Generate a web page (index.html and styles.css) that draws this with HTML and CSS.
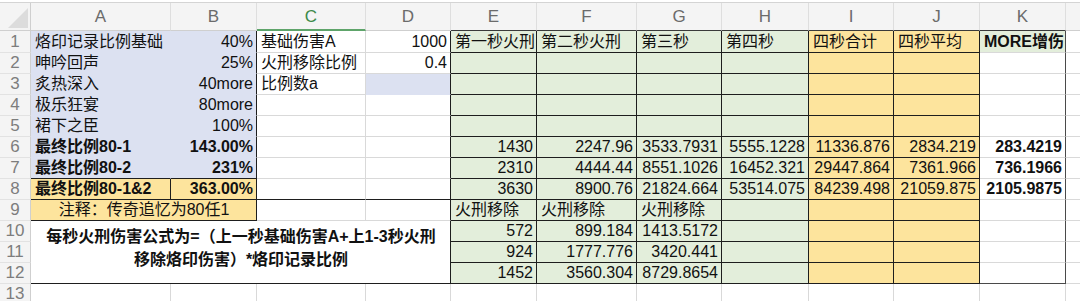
FILE: index.html
```html
<!DOCTYPE html>
<html lang="zh-CN">
<head>
<meta charset="utf-8">
<title>烙印记录</title>
<link rel="stylesheet" href="styles.css">
</head>
<body>
<div class="sheet">
  <!-- header row -->
  <div class="corner"><span class="tri"></span></div>
  <div class="ch">A</div>
  <div class="ch">B</div>
  <div class="ch sel">C</div>
  <div class="ch">D</div>
  <div class="ch dk">E</div>
  <div class="ch dk">F</div>
  <div class="ch dk">G</div>
  <div class="ch dk">H</div>
  <div class="ch dk">I</div>
  <div class="ch dk">J</div>
  <div class="ch dk">K</div>
  <div class="ch last"></div>

  <!-- row 1 -->
  <div class="rh">1</div>
  <div class="cell lav">烙印记录比例基础</div>
  <div class="cell lav r dr">40%</div>
  <div class="cell">基础伤害A</div>
  <div class="cell r dr">1000</div>
  <div class="cell grn dr db">第一秒火刑</div>
  <div class="cell grn dr db">第二秒火刑</div>
  <div class="cell grn dr db">第三秒</div>
  <div class="cell grn dr db">第四秒</div>
  <div class="cell yel dr db">四秒合计</div>
  <div class="cell yel dr db">四秒平均</div>
  <div class="cell grn b kr">MORE增伤</div>
  <div class="cell last"></div>

  <!-- row 2 -->
  <div class="rh">2</div>
  <div class="cell lav">呻吟回声</div>
  <div class="cell lav r dr">25%</div>
  <div class="cell">火刑移除比例</div>
  <div class="cell r dr">0.4</div>
  <div class="cell grn dr db"></div>
  <div class="cell grn dr db"></div>
  <div class="cell grn dr db"></div>
  <div class="cell grn dr db"></div>
  <div class="cell yel dr db"></div>
  <div class="cell yel dr db"></div>
  <div class="cell kr"></div>
  <div class="cell last"></div>

  <!-- row 3 -->
  <div class="rh">3</div>
  <div class="cell lav">炙热深入</div>
  <div class="cell lav r dr">40more</div>
  <div class="cell">比例数a</div>
  <div class="cell lav dr"></div>
  <div class="cell grn dr db"></div>
  <div class="cell grn dr db"></div>
  <div class="cell grn dr db"></div>
  <div class="cell grn dr db"></div>
  <div class="cell yel dr db"></div>
  <div class="cell yel dr db"></div>
  <div class="cell kr"></div>
  <div class="cell last"></div>

  <!-- row 4 -->
  <div class="rh">4</div>
  <div class="cell lav">极乐狂宴</div>
  <div class="cell lav r dr">80more</div>
  <div class="cell"></div>
  <div class="cell dr"></div>
  <div class="cell grn dr db"></div>
  <div class="cell grn dr db"></div>
  <div class="cell grn dr db"></div>
  <div class="cell grn dr db"></div>
  <div class="cell yel dr db"></div>
  <div class="cell yel dr db"></div>
  <div class="cell kr"></div>
  <div class="cell last"></div>

  <!-- row 5 -->
  <div class="rh">5</div>
  <div class="cell lav">裙下之臣</div>
  <div class="cell lav r dr">100%</div>
  <div class="cell"></div>
  <div class="cell dr"></div>
  <div class="cell grn dr db"></div>
  <div class="cell grn dr db"></div>
  <div class="cell grn dr db"></div>
  <div class="cell grn dr db"></div>
  <div class="cell yel dr db"></div>
  <div class="cell yel dr db"></div>
  <div class="cell kr"></div>
  <div class="cell last"></div>

  <!-- row 6 -->
  <div class="rh">6</div>
  <div class="cell lav b">最终比例80-1</div>
  <div class="cell lav r b dr">143.00%</div>
  <div class="cell"></div>
  <div class="cell dr"></div>
  <div class="cell grn r dr db">1430</div>
  <div class="cell grn r dr db">2247.96</div>
  <div class="cell grn r dr db">3533.7931</div>
  <div class="cell grn r dr db">5555.1228</div>
  <div class="cell yel r dr db">11336.876</div>
  <div class="cell yel r dr db">2834.219</div>
  <div class="cell r b kr">283.4219</div>
  <div class="cell last"></div>

  <!-- row 7 -->
  <div class="rh">7</div>
  <div class="cell lav b db">最终比例80-2</div>
  <div class="cell lav r b dr db">231%</div>
  <div class="cell"></div>
  <div class="cell dr"></div>
  <div class="cell grn r dr db">2310</div>
  <div class="cell grn r dr db">4444.44</div>
  <div class="cell grn r dr db">8551.1026</div>
  <div class="cell grn r dr db">16452.321</div>
  <div class="cell yel r dr db">29447.864</div>
  <div class="cell yel r dr db">7361.966</div>
  <div class="cell r b kr">736.1966</div>
  <div class="cell last"></div>

  <!-- row 8 -->
  <div class="rh">8</div>
  <div class="cell yel b dr db">最终比例80-1&amp;2</div>
  <div class="cell yel r b dr db">363.00%</div>
  <div class="cell db"></div>
  <div class="cell dr db"></div>
  <div class="cell grn r dr db">3630</div>
  <div class="cell grn r dr db">8900.76</div>
  <div class="cell grn r dr db">21824.664</div>
  <div class="cell grn r dr db">53514.075</div>
  <div class="cell yel r dr db">84239.498</div>
  <div class="cell yel r dr db">21059.875</div>
  <div class="cell r b kr">2105.9875</div>
  <div class="cell last"></div>

  <!-- row 9 -->
  <div class="rh">9</div>
  <div class="cell yel c span2 dr db">注释：传奇追忆为80任1</div>
  <div class="cell"></div>
  <div class="cell dr"></div>
  <div class="cell grn dr db">火刑移除</div>
  <div class="cell grn dr db">火刑移除</div>
  <div class="cell grn dr db">火刑移除</div>
  <div class="cell grn dr db"></div>
  <div class="cell yel dr db"></div>
  <div class="cell yel dr db"></div>
  <div class="cell kr"></div>
  <div class="cell last"></div>

  <!-- row 10 -->
  <div class="rh">10</div>
  <div class="cell formula b dr db">每秒火刑伤害公式为=（上一秒基础伤害A+上1-3秒火刑<br>移除烙印伤害）*烙印记录比例</div>
  <div class="cell grn r dr db">572</div>
  <div class="cell grn r dr db">899.184</div>
  <div class="cell grn r dr db">1413.5172</div>
  <div class="cell grn dr db"></div>
  <div class="cell yel dr db"></div>
  <div class="cell yel dr db"></div>
  <div class="cell kr"></div>
  <div class="cell last"></div>

  <!-- row 11 -->
  <div class="rh">11</div>
  <div class="cell grn r dr db">924</div>
  <div class="cell grn r dr db">1777.776</div>
  <div class="cell grn r dr db">3420.441</div>
  <div class="cell grn dr db"></div>
  <div class="cell yel dr db"></div>
  <div class="cell yel dr db"></div>
  <div class="cell kr"></div>
  <div class="cell last"></div>

  <!-- row 12 -->
  <div class="rh">12</div>
  <div class="cell grn r dr db">1452</div>
  <div class="cell grn r dr db">3560.304</div>
  <div class="cell grn r dr db">8729.8654</div>
  <div class="cell grn dr db"></div>
  <div class="cell yel dr db"></div>
  <div class="cell yel dr db"></div>
  <div class="cell kr kb"></div>
  <div class="cell last"></div>

  <!-- row 13 -->
  <div class="rh">13</div>
  <div class="cell"></div>
  <div class="cell"></div>
  <div class="cell"></div>
  <div class="cell"></div>
  <div class="cell"></div>
  <div class="cell"></div>
  <div class="cell"></div>
  <div class="cell"></div>
  <div class="cell"></div>
  <div class="cell"></div>
  <div class="cell"></div>
  <div class="cell last"></div>
</div>
</body>
</html>
```

FILE: styles.css
```css
:root {
  --grid: #d9d9d9;
  --dark: #1e1e1e;
  --lav: #dce1f1;
  --grn: #e3eedb;
  --yel: #fde49d;
  --hdr: #f4f4f4;
}

* { box-sizing: border-box; }

html, body {
  margin: 0;
  padding: 0;
  background: #ffffff;
}

body {
  font-family: "Liberation Sans", "Noto Sans CJK SC", sans-serif;
  font-size: 16px;
  color: #111;
  overflow: hidden;
  height: 301px;
}

.sheet {
  margin-top: 2px;
  border-top: 1px solid #d4d4d4;
  display: grid;
  grid-template-columns: 31px 140px 86px 109px 85px 86px 100px 85px 87px 85px 86px 86px 1fr;
  grid-template-rows: 28px 22px repeat(11, 21px) 1fr;
  height: 299px;
}

.corner {
  background: var(--hdr);
  border-right: 1px solid #cfcfcf;
  border-bottom: 1px solid #cfcfcf;
  position: relative;
}

.tri {
  position: absolute;
  right: 2px;
  bottom: 2px;
  width: 0;
  height: 0;
  border-left: 20px solid transparent;
  border-bottom: 20px solid #dcdcdc;
}

.ch {
  background: var(--hdr);
  color: #6b6b6b;
  font-size: 17px;
  display: flex;
  align-items: center;
  justify-content: center;
  border-right: 1px solid #dedede;
  border-bottom: 1px solid #cfcfcf;
  padding-top: 1px;
}

.ch.sel {
  color: #3d8a4a;
  border-bottom: 2px solid #5ea46a;
}

.ch.dk { border-bottom-color: #3a3a3a; }
.ch.last { border-right: none; }

.rh {
  background: var(--hdr);
  color: #7d7d7d;
  font-size: 17px;
  display: flex;
  align-items: flex-end;
  justify-content: center;
  line-height: 20px;
  border-right: 1px solid #cfcfcf;
  border-bottom: 1px solid #e2e2e2;
}

.cell {
  border-right: 1px solid var(--grid);
  border-bottom: 1px solid var(--grid);
  padding: 0 3px 0 4px;
  display: flex;
  align-items: flex-end;
  white-space: nowrap;
  overflow: hidden;
  line-height: 20px;
}

.cell.last { border-right: none; }

.r { justify-content: flex-end; }
.c { justify-content: center; }
.b { font-weight: bold; }

.lav { background: var(--lav); border-color: var(--lav); }
.grn { background: var(--grn); }
.yel { background: var(--yel); }

.dr { border-right-color: var(--dark); }
.db { border-bottom-color: var(--dark); }
.kr { border-right-color: #4a4a4a; }
.kb { border-bottom-color: #4a4a4a; }

.span2 { grid-column: span 2; }

.formula {
  grid-column: span 4;
  grid-row: span 3;
  white-space: normal;
  text-align: center;
  justify-content: center;
  align-items: center;
  line-height: 23px;
  padding-bottom: 9px;
}
```
